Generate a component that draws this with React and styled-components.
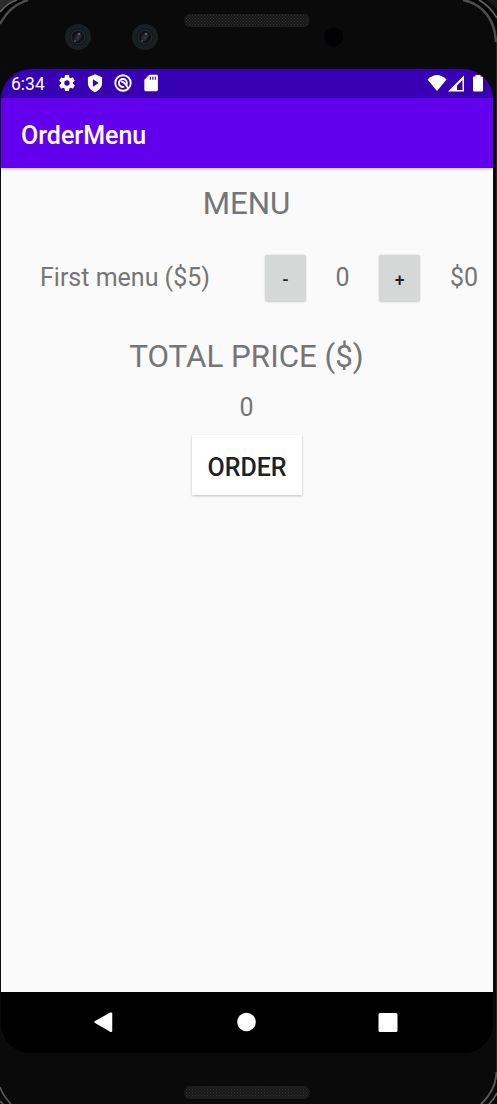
import { useState } from "react";
import styled, { createGlobalStyle } from "styled-components";

const GlobalStyle = createGlobalStyle`
  * {
    box-sizing: border-box;
  }
  body {
    margin: 0;
    background: #0a0a0a;
    font-family: Roboto, sans-serif;
  }
`;

const Phone = styled.div`
  position: relative;
  width: 497px;
  height: 1104px;
  overflow: hidden;
  background: #0a0a0a;
  display: flex;
  flex-direction: column;
`;

const Frame = styled.svg`
  position: absolute;
  inset: 0;
  pointer-events: none;
`;

const TopBezel = styled.div`
  height: 69px;
  flex-shrink: 0;
`;

const BottomBezel = styled.div`
  height: 51px;
  flex-shrink: 0;
`;

const Screen = styled.div`
  width: 492px;
  height: 984px;
  margin-left: 1px;
  border-radius: 30px;
  overflow: hidden;
  background: black;
  display: flex;
  flex-direction: column;
`;

const StatusBar = styled.div`
  height: 29px;
  flex-shrink: 0;
  background: #3700b3;
  color: white;
  display: flex;
  align-items: center;
  justify-content: space-between;
  padding: 0 9px 0 10px;
`;

const StatusGroup = styled.div`
  display: flex;
  align-items: center;
`;

const Time = styled.span`
  width: 46px;
  font-size: 17.5px;
  line-height: 29px;
  padding-top: 1px;
`;

const StatusIcon = styled.svg`
  width: ${(props) => props.$w || 20}px;
  height: 20px;
  margin: 0 0 1px ${(props) => props.$gap || 0}px;
  fill: white;
  display: block;
`;

const AppBar = styled.header`
  position: relative;
  height: 70px;
  flex-shrink: 0;
  padding-left: 20px;
  background: #6200ee;
  box-shadow: 0 1px 3px rgba(0, 0, 0, 0.25);
  display: flex;
  align-items: center;
`;

const Title = styled.h1`
  margin: 5px 0 0;
  color: white;
  font-size: 25px;
  font-weight: 500;
  line-height: 30px;
`;

const Content = styled.main`
  flex: 1;
  display: flex;
  flex-direction: column;
  align-items: center;
  padding-top: 17px;
  background: #fafafa;
  color: #757575;
`;

const Heading = styled.h2`
  margin: 0 1px 0 0;
  font-size: 31.3px;
  font-weight: 400;
  line-height: 38px;
`;

const MenuRow = styled.div`
  width: 100%;
  height: 47px;
  margin: 31px 0 37px;
  padding: 0 15px 0 39px;
  display: flex;
  align-items: center;
`;

const Label = styled.span`
  width: ${(props) => props.$w || "auto"};
  text-align: ${(props) => props.$align || "left"};
  font-size: 25px;
  line-height: 30px;
  white-space: nowrap;
`;

const StepButton = styled.button`
  width: 41px;
  height: 46px;
  margin-top: 1px;
  padding: 3px 0 0;
  border: none;
  border-radius: 2.5px;
  background: #d6d7d7;
  box-shadow: 0 0.5px 2px rgba(0, 0, 0, 0.2);
  color: #212121;
  font-family: inherit;
  font-size: 17.5px;
  font-weight: 500;
`;

const Total = styled.div`
  margin: 17px 1px 0 0;
  font-size: 25px;
  line-height: 30px;
`;

const OrderButton = styled.button`
  width: 110px;
  height: 60px;
  margin: 12px 0 0;
  padding: 4px 0 0;
  border: none;
  background: white;
  box-shadow: 0 1px 2.5px rgba(0, 0, 0, 0.24);
  color: #212121;
  font-family: inherit;
  font-size: 25px;
  font-weight: 500;
`;

const NavBar = styled.nav`
  height: 61px;
  flex-shrink: 0;
  background: black;
`;

const Camera = ({ x, y }) => (
  <g transform={`translate(${x} ${y})`}>
    <circle r="13" fill="#192025" />
    <circle r="8.5" fill="#111317" />
    <circle r="7" fill="none" stroke="#2b2c30" strokeWidth="1.2" />
    <ellipse rx="3" ry="4.5" fill="#25282f" transform="rotate(35)" />
    <circle cx="1" cy="-3" r="1.2" fill="#5c606c" />
    <circle cx="-3" cy="4" r="1" fill="#54545a" />
    <circle cx="0" cy="1" r="0.8" fill="#44506a" />
  </g>
);

const PhoneFrame = () => (
  <Frame width="497" height="1104" viewBox="0 0 497 1104">
    <defs>
      <pattern id="mesh" width="3" height="3" patternUnits="userSpaceOnUse">
        <rect width="3" height="3" fill="#171717" />
        <rect width="1" height="1" fill="#343434" />
        <rect x="1.5" y="1.5" width="1" height="1" fill="#303030" />
      </pattern>
    </defs>
    <path d="M0 0H14Q5 4 0 11Z" fill="#2a2a2a" />
    <path d="M28 0Q10 5 0 24" fill="none" stroke="#4c4b50" strokeWidth="2.5" />
    <path d="M22 0Q8 4 0 17" fill="none" stroke="#000" strokeWidth="2" />
    <path d="M17 0Q7 3 0 12" fill="none" stroke="#666" strokeWidth="1.5" />
    <path d="M487 0Q493 4 497 10V0Z" fill="#1a1a1a" />
    <path d="M463 0C483 4 495 20 496 42" fill="none" stroke="#4c4b50" strokeWidth="2.5" />
    <path d="M472 0Q488 6 497 26" fill="none" stroke="#000" strokeWidth="2" />
    <path d="M479 0Q490 6 497 18" fill="none" stroke="#666" strokeWidth="1.5" />
    <path d="M496.5 42V1072" stroke="#25252a" />
    <path d="M496.5 1072Q496 1090 481 1104" fill="none" stroke="#59595d" strokeWidth="2" />
    <path d="M497 1093Q494 1099 489 1104" fill="none" stroke="#68686b" strokeWidth="1.6" />
    <path d="M0 1087Q3 1096 11 1104M0 1101L3 1104" fill="none" stroke="#59595d" strokeWidth="1.6" />
    <rect x="185" y="14.5" width="124" height="12" rx="4.5" fill="url(#mesh)" stroke="#1d1d1d" />
    <rect x="185" y="1086.5" width="124" height="12" rx="4.5" fill="url(#mesh)" stroke="#1d1d1d" />
    <Camera x={78} y={37} />
    <Camera x={145} y={37} />
    <circle cx="333.5" cy="37" r="9.5" fill="#020104" />
  </Frame>
);

const App = () => {
  const [count, setCount] = useState(0);
  const price = 5;

  return (
    <Phone>
      <GlobalStyle />
      <PhoneFrame />
      <TopBezel />
      <Screen>
        <StatusBar>
          <StatusGroup>
            <Time>6:34</Time>
            <StatusIcon viewBox="0 0 24 24">
              <path d="M19.14 12.94c.04-.3.06-.61.06-.94s-.02-.64-.07-.94l2.03-1.58c.18-.14.23-.41.12-.61l-1.92-3.32c-.12-.22-.37-.29-.59-.22l-2.39.96c-.5-.38-1.03-.7-1.62-.94l-.36-2.54c-.04-.24-.24-.41-.48-.41h-3.84c-.24 0-.43.17-.47.41l-.36 2.54c-.59.24-1.13.57-1.62.94l-2.39-.96c-.22-.08-.47 0-.59.22L2.74 8.87c-.12.21-.08.47.12.61l2.03 1.58c-.05.3-.09.63-.09.94s.02.64.07.94l-2.03 1.58c-.18.14-.23.41-.12.61l1.92 3.32c.12.22.37.29.59.22l2.39-.96c.5.38 1.03.7 1.62.94l.36 2.54c.05.24.24.41.48.41h3.84c.24 0 .44-.17.47-.41l.36-2.54c.59-.24 1.13-.56 1.62-.94l2.39.96c.22.08.47 0 .59-.22l1.92-3.32c.12-.22.07-.47-.12-.61l-2.01-1.58zM12 15.2A3.2 3.2 0 1 1 12 8.8a3.2 3.2 0 0 1 0 6.4z" />
            </StatusIcon>
            <StatusIcon viewBox="0 0 24 24" $gap={8}>
              <path fillRule="evenodd" d="M12 1.5 3.5 5v7c0 5 3.4 9 8.5 11 5.1-2 8.5-6 8.5-11V5zM9.5 7.5l7 4.5-7 4.5z" />
            </StatusIcon>
            <StatusIcon viewBox="0 0 24 24" $gap={8}>
              <circle cx="12" cy="12" r="9.3" fill="none" stroke="white" strokeWidth="2.2" />
              <path d="M13.5 16.5A4.8 4.8 0 1 1 16.3 13.8M9.5 10.5C12 9.5 14 12 18.5 18.5" fill="none" stroke="white" strokeWidth="2.2" />
            </StatusIcon>
            <StatusIcon viewBox="0 0 24 24" $gap={8}>
              <path fillRule="evenodd" d="M18.5 2H10L4 8v12.2c0 1 .8 1.8 1.8 1.8h12.7c1 0 1.8-.8 1.8-1.8V3.8c0-1-.8-1.8-1.8-1.8zM10.5 4.5h1.4v3.5h-1.4zm3 0h1.4v3.5h-1.4zm3 0h1.4v3.5h-1.4z" />
            </StatusIcon>
          </StatusGroup>
          <StatusGroup>
            <StatusIcon viewBox="0 0 20 20" $w={20}>
              <path d="M.5 6.5Q10-2.5 19.5 6.5L10 18z" />
            </StatusIcon>
            <StatusIcon viewBox="0 0 18 20" $w={18}>
              <path fillRule="evenodd" d="M17 2.5v16H1zM15.5 7l-5.5 5.5v4.5h5.5z" />
            </StatusIcon>
            <StatusIcon viewBox="0 0 12 20" $w={12} $gap={7}>
              <path d="M3.500 2h5v1.500H10q1 0 1 1v13q0 1-1 1H2q-1 0-1-1v-13q0-1 1-1h1.500z" />
            </StatusIcon>
          </StatusGroup>
        </StatusBar>
        <AppBar>
          <Title>OrderMenu</Title>
        </AppBar>
        <Content>
          <Heading>MENU</Heading>
          <MenuRow>
            <Label $w="225px">First menu ($5)</Label>
            <StepButton onClick={() => setCount(Math.max(0, count - 1))}>-</StepButton>
            <Label $w="73px" $align="center">{count}</Label>
            <StepButton onClick={() => setCount(count + 1)}>+</StepButton>
            <Label $w="58px" $align="right">${count * price}</Label>
          </MenuRow>
          <Heading>TOTAL PRICE ($)</Heading>
          <Total>{count * price}</Total>
          <OrderButton>ORDER</OrderButton>
        </Content>
        <NavBar>
          <svg width="492" height="61" viewBox="0 0 492 61">
            <path d="M94 30 109.500 21.200h1V39.200h-1z" fill="white" stroke="white" strokeWidth="1.5" strokeLinejoin="round" />
            <circle cx="245.5" cy="30" r="9.3" fill="white" />
            <rect x="377.5" y="21" width="19" height="19" rx="1.5" fill="white" />
          </svg>
        </NavBar>
      </Screen>
      <BottomBezel />
    </Phone>
  );
};

export default App;
